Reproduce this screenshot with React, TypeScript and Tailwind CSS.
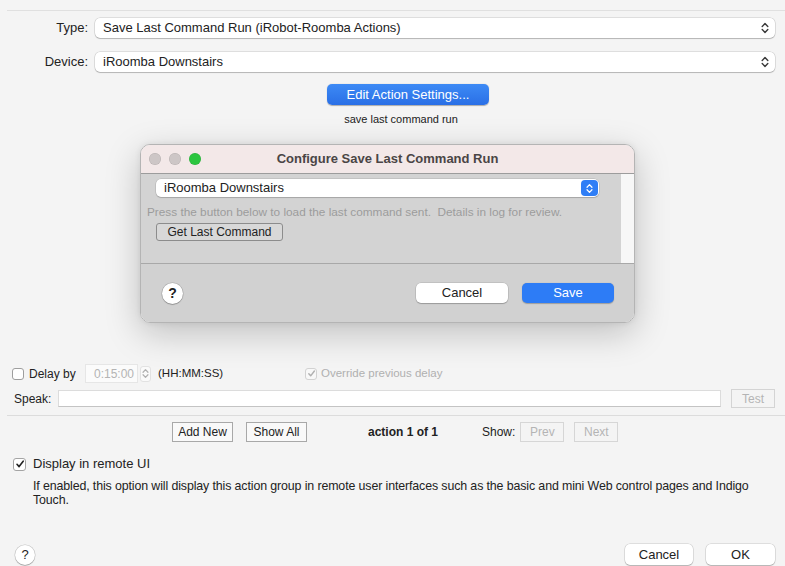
import React from "react";

const Chevrons = ({ color = "#3a3a3a", w = 8, h = 12 }: { color?: string; w?: number; h?: number }) => (
  <svg width={w} height={h} viewBox="0 0 8 12" fill="none">
    <path d="M1.2 4.6 L4 1.6 L6.8 4.6" stroke={color} strokeWidth="1.4" strokeLinecap="round" strokeLinejoin="round" />
    <path d="M1.2 7.4 L4 10.4 L6.8 7.4" stroke={color} strokeWidth="1.4" strokeLinecap="round" strokeLinejoin="round" />
  </svg>
);

const Check = ({ color = "#222", size = 10 }: { color?: string; size?: number }) => (
  <svg width={size} height={size} viewBox="0 0 10 10" fill="none">
    <path d="M2 5.3 L4.1 7.6 L8.2 2.2" stroke={color} strokeWidth="1.6" strokeLinecap="round" strokeLinejoin="round" />
  </svg>
);

export default function App() {
  return (
    <div className="relative w-[785px] h-[566px] overflow-hidden bg-[#f4f4f4] text-[#222] font-['Liberation_Sans',Arial,sans-serif]">
      <div className="pt-[10px]">
        <div className="ml-[7px] h-px bg-[#e0e0e0]" />

        {/* Type row */}
        <div className="mt-[7px] flex h-[20px] items-center">
          <div className="w-[88px] text-right text-[13px]">Type:</div>
          <div className="ml-[7px] flex h-[20px] w-[680px] items-center justify-between rounded-[5px] bg-white pl-[8px] pr-[6px] text-[13px] shadow-[0_0_0_0.5px_rgba(0,0,0,0.18),0_1px_1px_rgba(0,0,0,0.18)]">
            <span>Save Last Command Run (iRobot-Roomba Actions)</span>
            <Chevrons />
          </div>
        </div>

        {/* Device row */}
        <div className="mt-[14px] flex h-[20px] items-center">
          <div className="w-[88px] text-right text-[13px]">Device:</div>
          <div className="ml-[7px] flex h-[20px] w-[680px] items-center justify-between rounded-[5px] bg-white pl-[8px] pr-[6px] text-[13px] shadow-[0_0_0_0.5px_rgba(0,0,0,0.18),0_1px_1px_rgba(0,0,0,0.18)]">
            <span>iRoomba Downstairs</span>
            <Chevrons />
          </div>
        </div>

        {/* Edit button */}
        <div className="ml-[327px] mt-[12px] flex h-[21px] w-[162px] items-center justify-center rounded-[5px] bg-gradient-to-b from-[#3d8af5] to-[#2a6fe6] text-[13px] text-white shadow-[0_0.5px_1px_rgba(0,0,0,0.3)]">
          Edit Action Settings...
        </div>
        <div className="ml-[327px] mt-[7px] w-[148px] text-center text-[11px] leading-[14px]">save last command run</div>

        {/* Delay row */}
        <div className="mt-[238px] flex h-[19px] items-center text-[12px]">
          <div className="ml-[12px] h-[12px] w-[12px] shrink-0 rounded-[3px] border border-[#9e9e9e] bg-white" />
          <span className="ml-[5px] w-[56px] shrink-0">Delay by</span>
          <div className="flex h-[19px] w-[53px] shrink-0 items-center justify-end border border-[#e6e6e6] bg-[#fbfbfb] pr-[3px] text-[#b4b4b4]">0:15:00</div>
          <div className="ml-[2px] flex h-[16px] w-[11px] shrink-0 items-center justify-center rounded-[3px] border border-[#e2e2e2] bg-[#fafafa]">
            <Chevrons color="#b0b0b0" w={7} h={11} />
          </div>
          <span className="ml-[7px] w-[147px] shrink-0 text-[11.5px]">(HH:MM:SS)</span>
          <div className="flex h-[12px] w-[12px] shrink-0 items-center justify-center rounded-[3px] border border-[#d2d2d2] bg-[#f8f8f8]">
            <Check color="#b0b0b0" size={9} />
          </div>
          <span className="ml-[4px] text-[11.5px] text-[#b0b0b0]">Override previous delay</span>
        </div>

        {/* Speak row */}
        <div className="mt-[6px] flex h-[19px] items-center text-[12px]">
          <span className="ml-[14px] w-[44px]">Speak:</span>
          <div className="h-[17px] w-[663px] border border-[#dcdcdc] border-b-[#c4c4c4] bg-white" />
          <div className="ml-[10px] flex h-[19px] w-[44px] items-center justify-center border border-[#d4d4d4] text-[#b4b4b4]">Test</div>
        </div>

        <div className="ml-[7px] mt-[7px] h-px bg-[#dcdcdc]" />

        {/* Navigation row */}
        <div className="mt-[6px] flex h-[20px] items-center text-[12px]">
          <div className="ml-[172px] flex h-[20px] w-[61px] items-center justify-center border border-[#a8a8a8] bg-[#f9f9f9]">Add New</div>
          <div className="ml-[13px] flex h-[20px] w-[61px] items-center justify-center border border-[#a8a8a8] bg-[#f9f9f9]">Show All</div>
          <span className="ml-[61px] font-bold">action 1 of 1</span>
          <span className="ml-[44px]">Show:</span>
          <div className="ml-[5px] flex h-[20px] w-[44px] items-center justify-center border border-[#d6d6d6] text-[#b4b4b4]">Prev</div>
          <div className="ml-[10px] flex h-[20px] w-[44px] items-center justify-center border border-[#d6d6d6] text-[#b4b4b4]">Next</div>
        </div>

        {/* Display in remote UI */}
        <div className="mt-[14px] flex h-[16px] items-center text-[13px]">
          <div className="ml-[13px] flex h-[13px] w-[13px] items-center justify-center rounded-[3px] border border-[#a4a4a4] bg-white">
            <Check size={10} />
          </div>
          <span className="ml-[7px]">Display in remote UI</span>
        </div>
        <div className="ml-[33px] mt-[7px] w-[735px] text-[12.4px] leading-[14px] tracking-[-0.12px]">
          If enabled, this option will display this action group in remote user interfaces such as the basic and mini Web control pages and Indigo Touch.
        </div>

        {/* Bottom buttons */}
        <div className="mt-[37px] flex h-[21px] items-center">
          <div className="ml-[15px] flex h-[20px] w-[20px] items-center justify-center rounded-full bg-white text-[13px] shadow-[0_0_0_0.5px_rgba(0,0,0,0.2),0_1px_1px_rgba(0,0,0,0.2)]">?</div>
          <div className="ml-[590px] flex h-[21px] w-[68px] items-center justify-center rounded-[5px] bg-white text-[13px] shadow-[0_0_0_0.5px_rgba(0,0,0,0.18),0_1px_1px_rgba(0,0,0,0.18)]">Cancel</div>
          <div className="ml-[13px] flex h-[21px] w-[69px] items-center justify-center rounded-[5px] bg-white text-[13px] shadow-[0_0_0_0.5px_rgba(0,0,0,0.18),0_1px_1px_rgba(0,0,0,0.18)]">OK</div>
        </div>
      </div>

      {/* Modal window */}
      <div className="absolute left-[140px] top-[144px] flex h-[179px] w-[495px] flex-col overflow-hidden rounded-[10px] border border-[#b4b4b4] shadow-[0_10px_35px_rgba(0,0,0,0.22),0_0_6px_rgba(0,0,0,0.08)]">
        <div className="relative flex h-[29px] items-center justify-center border-b border-[#9c9c9c] bg-[#f3e8e8]">
          <div className="absolute left-[8px] top-[8px] flex gap-[8px]">
            <div className="h-[12px] w-[12px] rounded-full bg-[#cdc6c6] shadow-[inset_0_0_0_0.5px_rgba(0,0,0,0.12)]" />
            <div className="h-[12px] w-[12px] rounded-full bg-[#cdc6c6] shadow-[inset_0_0_0_0.5px_rgba(0,0,0,0.12)]" />
            <div className="h-[12px] w-[12px] rounded-full bg-[#2cc53f] shadow-[inset_0_0_0_0.5px_rgba(0,0,0,0.12)]" />
          </div>
          <span className="text-[13px] font-bold text-[#4a4545]">Configure Save Last Command Run</span>
        </div>
        <div className="flex h-[89px]">
          <div className="w-[480px] bg-[#d3d3d3]">
            <div className="ml-[15px] mt-[5px] flex h-[18px] w-[443px] items-center justify-between rounded-[5px] bg-white pl-[8px] pr-[1px] text-[13px] shadow-[0_0_0_0.5px_rgba(0,0,0,0.15),0_1px_1px_rgba(0,0,0,0.15)]">
              <span>iRoomba Downstairs</span>
              <div className="flex h-[16px] w-[17px] items-center justify-center rounded-[4px] bg-[#2f7ef6]">
                <Chevrons color="#ffffff" w={7} h={11} />
              </div>
            </div>
            <div className="ml-[6px] mt-[8px] text-[11.8px] leading-[14px] text-[#9c9c9c]">
              Press the button below to load the last command sent.&nbsp; Details in log for review.
            </div>
            <div className="ml-[15px] mt-[4px] flex h-[18px] w-[127px] items-center justify-center rounded-[3px] border border-[#8c8c8c] bg-[#d8d8d8] text-[12px]">
              Get Last Command
            </div>
          </div>
          <div className="flex-1 bg-[#f7f7f7]" />
        </div>
        <div className="flex flex-1 items-center border-t border-[#a8a8a8] bg-[#d1d1d1]">
          <div className="ml-[21px] flex h-[21px] w-[21px] items-center justify-center rounded-full bg-white text-[14px] font-bold shadow-[0_0_0_0.5px_rgba(0,0,0,0.2),0_1px_1px_rgba(0,0,0,0.2)]">?</div>
          <div className="ml-[233px] flex h-[20px] w-[92px] items-center justify-center rounded-[5px] bg-white text-[13px] shadow-[0_0_0_0.5px_rgba(0,0,0,0.15),0_1px_1px_rgba(0,0,0,0.2)]">Cancel</div>
          <div className="ml-[14px] flex h-[20px] w-[92px] items-center justify-center rounded-[5px] bg-[#2d7cf6] text-[13px] text-white shadow-[0_0.5px_1px_rgba(0,0,0,0.25)]">Save</div>
        </div>
      </div>
    </div>
  );
}
